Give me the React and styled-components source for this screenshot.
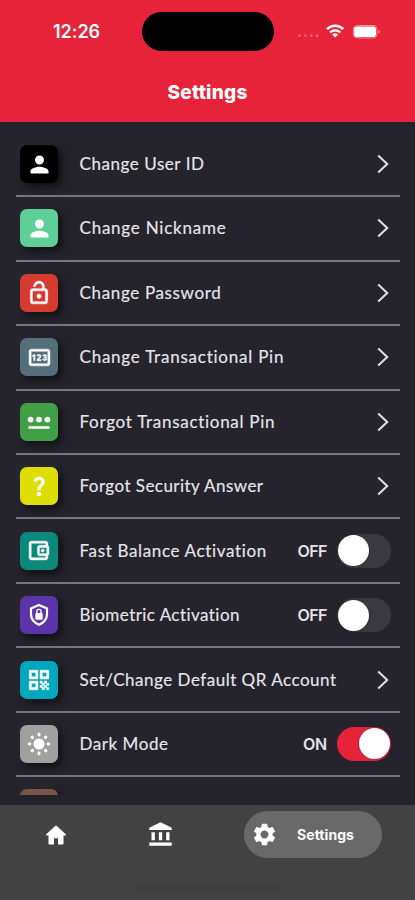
import React, { useLayoutEffect, useRef, useState } from 'react'
import styled, { createGlobalStyle } from 'styled-components'
import {
    MdPerson,
    MdOutlineLockOpen,
    MdOutlinePin,
    MdQuestionMark,
    MdOutlineAccountBalanceWallet,
    MdQrCode,
    MdAccountBalance,
    MdSettings
} from 'react-icons/md'

const GlobalStyle = createGlobalStyle`
  * {
    box-sizing: border-box;
  }

  body {
    margin: 0;
    background: #25242d;
    font-family: Lato, 'Open Sans', sans-serif;
    -webkit-font-smoothing: antialiased;
  }
`

const Screen = styled.div`
  display: flex;
  flex-direction: column;
  width: 415px;
  height: 900px;
  overflow: hidden;
  background: #25242d;
`

const Header = styled.header`
  flex: none;
  height: 122px;
  background: #e62339;
  color: #fff;
`

const StatusBar = styled.div`
  display: grid;
  grid-template-columns: 142px 132px 1fr;
  align-items: center;
  height: 63px;
`

const Time = styled.div`
  padding-left: 53px;
  font: 600 18px/22px Inter, sans-serif;
`

const Island = styled.div`
  height: 39px;
  border-radius: 20px;
  background: #000;
`

const StatusIcons = styled.div`
  display: flex;
  align-items: center;
  padding-left: 23px;
`

const Title = styled.h1`
  display: flex;
  justify-content: center;
  margin: 0;
  padding-top: 18px;
  font: 800 19px/24px Inter, sans-serif;
`

const List = styled.main`
  flex: none;
  height: 673px;
  padding: 10.8px 15.5px 0 16px;
  overflow: hidden;
`

const Row = styled.div`
  display: flex;
  align-items: center;
  height: 64.45px;
  padding: 0 8.5px 0 4px;
  border-bottom: 2px solid #77767e;
`

const Tile = styled.div`
  display: flex;
  flex: none;
  align-items: center;
  justify-content: center;
  width: 38px;
  height: 38px;
  margin-right: 21.5px;
  border-radius: 7px;
  background: ${props => props.$color};
  box-shadow: 4px 4px 9px rgba(0, 0, 0, 0.6), -3px -3px 9px rgba(255, 255, 255, 0.03);
  color: #fff;

  svg {
    stroke-width: ${props => (props.$bold ? 0.5 : 0)};
    stroke: currentColor;
  }

  /* the icon set puts an empty bounding box in each glyph */
  path[fill='none'] {
    stroke: none;
  }
`

const Label = styled.div`
  flex: 1;
  color: #e6e6e9;
  font-size: 17px;
  line-height: 22px;
  -webkit-text-stroke: 0.15px #e6e6e9;
`

const State = styled.span`
  margin-right: 10px;
  color: #e3e3e6;
  font: 600 16px/20px Inter, sans-serif;
`

const Track = styled.div`
  display: flex;
  flex: none;
  align-items: center;
  justify-content: ${props => (props.$on ? 'flex-end' : 'flex-start')};
  width: 54px;
  height: 34px;
  padding: 0 1px;
  border-radius: 17px;
  background: ${props => (props.$on ? '#e62339' : '#3a3940')};
`

const Thumb = styled.div`
  width: 31px;
  height: 31px;
  border-radius: 50%;
  background: #fff;
  box-shadow: 0 0 2px rgba(0, 0, 0, 0.5);
`

const ChevronSvg = styled.svg`
  flex: none;
  margin-right: 2px;
`

const TabBar = styled.nav`
  display: grid;
  flex: none;
  grid-template-columns: 112px 96px 1fr;
  justify-items: center;
  height: 95px;
  margin-top: 10px;
  padding-top: 6px;
  background: #424242;
  color: #fff;
`

const Tab = styled.a`
  display: flex;
  align-items: center;
  height: 47px;
  color: #fff;
`

const ActiveTab = styled(Tab)`
  justify-self: start;
  width: 138px;
  margin-left: 36px;
  padding-left: 7px;
  border-radius: 24px;
  background: #696969;
  font: 700 14px/18px Inter, sans-serif;

  svg {
    margin-right: 19px;
  }
`

const HomeIndicator = styled.div`
  grid-column: 1 / -1;
  width: 143px;
  height: 5px;
  align-self: end;
  margin-bottom: 9px;
  border-radius: 3px;
  background: #3f3f3f;
`

const Fitted = styled.span`
  display: inline-block;
  white-space: nowrap;
`

// spreads the letters so that the text takes up the given width
const FitText = ({ width, children }) => {
    const ref = useRef(null)
    const [spacing, setSpacing] = useState(0)

    useLayoutEffect(() => {
        const natural = ref.current.getBoundingClientRect().width
        setSpacing((width - natural) / children.length)
    }, [])

    return (
        <Fitted ref={ref} style={{ letterSpacing: spacing }}>{children}</Fitted>
    )
}

const Chevron = () => (
    <ChevronSvg width="12" height="20" viewBox="0 0 12 20" fill="none" stroke="#dddde1" strokeWidth="2.1">
        <path d="M1.2 1.6L10.2 10L1.2 18.4" />
    </ChevronSvg>
)

const Dots = () => (
    <svg width="26" height="22" viewBox="0 0 26 22" fill="#fff">
        <circle cx="4.6" cy="8.6" r="2.9" />
        <circle cx="13" cy="8.6" r="2.9" />
        <circle cx="21.4" cy="8.6" r="2.9" />
        <rect x="2.4" y="15.2" width="21.2" height="2.6" rx="0.6" />
    </svg>
)

const ShieldLock = () => (
    <svg width="22" height="24" viewBox="0 0 22 24" fill="none">
        <path d="M11 2L19 5.4V11C19 15.8 16 19.7 11 21.7C6 19.7 3 15.8 3 11V5.4Z" style={{ strokeWidth: 2.2 }} />
        <rect x="7.3" y="10" width="7.4" height="6.8" rx="1" fill="#fff" />
        <path d="M8.9 10.5V8.5a2.1 2.1 0 0 1 4.2 0v2" style={{ strokeWidth: 1.4 }} />
    </svg>
)

const Sun = () => (
    <svg width="24" height="24" viewBox="0 0 24 24" fill="#fff">
        <circle cx="12" cy="12" r="5.5" />
        {[0, 45, 90, 135, 180, 225, 270, 315].map(angle => (
            <rect key={angle} x="10.5" y="0.8" width="3" height="3.6" rx="1.4" transform={`rotate(${angle} 12 12)`} />
        ))}
    </svg>
)

const Home = () => (
    <svg width="22" height="22" viewBox="0 0 22 22" fill="#fff">
        <path d="M11 1.2L21 10.4C21.5 11 21.2 11.5 20.5 11.5H18.5V19.5Q18.5 20.5 17.5 20.5H13V14.3H9V20.5H4.5Q3.5 20.5 3.5 19.5V11.5H1.5C.8 11.5 .5 11 1 10.4Z" />
    </svg>
)

const Signal = () => (
    <svg width="97" height="20" viewBox="0 0 97 20" fill="none">
        <g fill="#ee6072">
            <circle cx="2.6" cy="13.7" r="1.4" />
            <circle cx="8.4" cy="13.7" r="1.4" />
            <circle cx="14.2" cy="13.7" r="1.4" />
            <circle cx="20" cy="13.7" r="1.4" />
        </g>
        <g stroke="#fff" strokeWidth="2.4">
            <path d="M30.1 7.2C34.6 2.6 41.8 2.6 46.3 7.2" />
            <path d="M33.1 10.5C36 7.7 40.4 7.7 43.3 10.5" />
        </g>
        <path d="M35.2 12.4Q38.2 10 41.2 12.4L38.2 15.5Z" fill="#fff" />
        <rect x="56.2" y="3.5" width="23.8" height="12.4" rx="3.8" stroke="#f38a99" strokeWidth="1" />
        <rect x="57" y="4.4" width="22" height="10.6" rx="2.8" fill="#fff" />
        <path d="M81.5 7.8Q84.5 9.7 81.5 11.8Z" fill="#f38a99" />
    </svg>
)

const WalletIcon = styled(MdOutlineAccountBalanceWallet)`
  margin-right: 2px;
`

const items = [
    { label: 'Change User ID', width: 125, color: '#000', icon: <MdPerson size={27} /> },
    { label: 'Change Nickname', width: 147, color: '#5fcf98', icon: <MdPerson size={27} /> },
    { label: 'Change Password', width: 142, color: '#d63b30', icon: <MdOutlineLockOpen size={26} />, bold: true },
    { label: 'Change Transactional Pin', width: 205, color: '#546e7a', icon: <MdOutlinePin size={25} />, bold: true },
    { label: 'Forgot Transactional Pin', width: 196, color: '#419f48', icon: <Dots /> },
    { label: 'Forgot Security Answer', width: 184, color: '#dede06', icon: <MdQuestionMark size={24} />, bold: true },
    { label: 'Fast Balance Activation', width: 188, color: '#0b897a', icon: <WalletIcon size={25} />, bold: true, on: false },
    { label: 'Biometric Activation', width: 161, color: '#5c34aa', icon: <ShieldLock />, on: false },
    { label: 'Set/Change Default QR Account', width: 257, color: '#03a7bd', icon: <MdQrCode size={26} />, bold: true },
    { label: 'Dark Mode', width: 89, color: '#a0a0a0', icon: <Sun />, on: true }
]

const SettingsRow = ({ item }) => (
    <Row>
        <Tile $color={item.color} $bold={item.bold}>{item.icon}</Tile>
        <Label><FitText width={item.width}>{item.label}</FitText></Label>
        {item.on === undefined ? <Chevron /> : (
            <>
                <State><FitText width={item.on ? 24 : 29.5}>{item.on ? 'ON' : 'OFF'}</FitText></State>
                <Track $on={item.on}><Thumb /></Track>
            </>
        )}
    </Row>
)

export const App = () => (
    <>
        <GlobalStyle />
        <Screen>
            <Header>
                <StatusBar>
                    <Time><FitText width={47}>12:26</FitText></Time>
                    <Island />
                    <StatusIcons><Signal /></StatusIcons>
                </StatusBar>
                <Title><FitText width={80}>Settings</FitText></Title>
            </Header>

            <List>
                {items.map(item => <SettingsRow key={item.label} item={item} />)}
                <Row>
                    <Tile $color="#795548" />
                </Row>
            </List>

            <TabBar>
                <Tab title="Home"><Home /></Tab>
                <Tab title="Accounts"><MdAccountBalance size={27} /></Tab>
                <ActiveTab>
                    <MdSettings size={27} />
                    <FitText width={57}>Settings</FitText>
                </ActiveTab>
                <HomeIndicator />
            </TabBar>
        </Screen>
    </>
)

export default App
